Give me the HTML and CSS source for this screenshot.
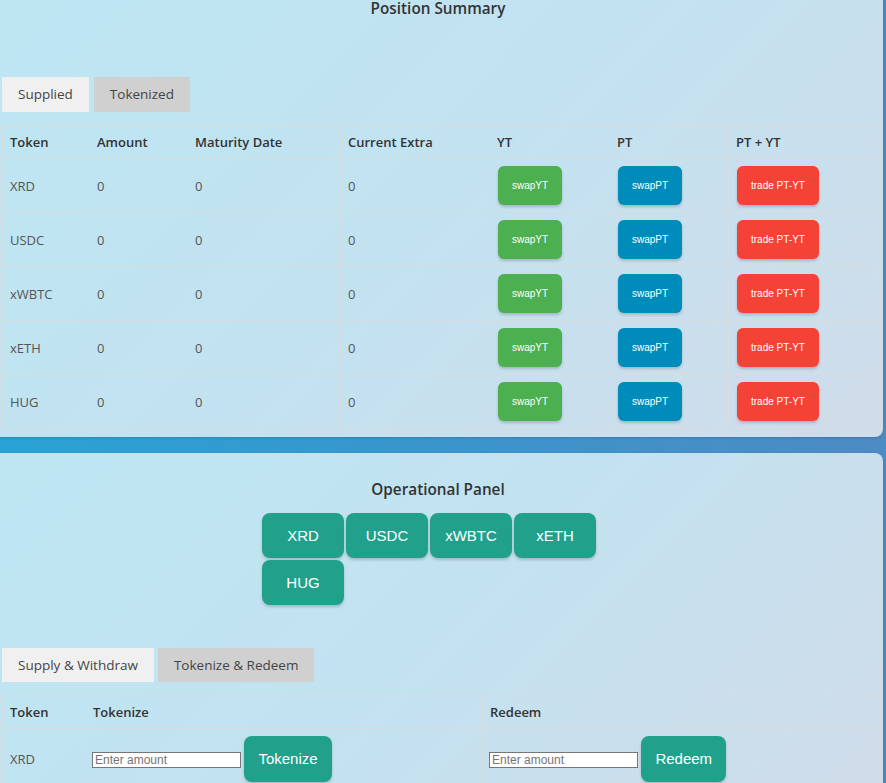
FILE: index.html
```html
<!DOCTYPE html>
<html lang="en">
<head>
<meta charset="utf-8">
<title>Position Summary</title>
<link rel="stylesheet" href="styles.css">
</head>
<body>
<main class="page">
  <section class="card card-summary">
    <h2 class="card-title">Position Summary</h2>
    <div class="tabs">
      <button class="tab tab-active">Supplied</button>
      <button class="tab">Tokenized</button>
    </div>
    <table class="grid">
      <colgroup>
        <col class="c-token"><col class="c-amount"><col class="c-maturity"><col class="c-extra"><col class="c-yt"><col class="c-pt"><col class="c-ptyt">
      </colgroup>
      <thead>
        <tr><th>Token</th><th>Amount</th><th>Maturity Date</th><th>Current Extra</th><th>YT</th><th>PT</th><th>PT + YT</th></tr>
      </thead>
      <tbody>
        <tr><td>XRD</td><td>0</td><td>0</td><td>0</td><td class="bcell"><button class="sbtn green">swapYT</button></td><td class="bcell"><button class="sbtn blue">swapPT</button></td><td class="bcell"><button class="sbtn red">trade PT-YT</button></td></tr>
        <tr><td>USDC</td><td>0</td><td>0</td><td>0</td><td class="bcell"><button class="sbtn green">swapYT</button></td><td class="bcell"><button class="sbtn blue">swapPT</button></td><td class="bcell"><button class="sbtn red">trade PT-YT</button></td></tr>
        <tr><td>xWBTC</td><td>0</td><td>0</td><td>0</td><td class="bcell"><button class="sbtn green">swapYT</button></td><td class="bcell"><button class="sbtn blue">swapPT</button></td><td class="bcell"><button class="sbtn red">trade PT-YT</button></td></tr>
        <tr><td>xETH</td><td>0</td><td>0</td><td>0</td><td class="bcell"><button class="sbtn green">swapYT</button></td><td class="bcell"><button class="sbtn blue">swapPT</button></td><td class="bcell"><button class="sbtn red">trade PT-YT</button></td></tr>
        <tr><td>HUG</td><td>0</td><td>0</td><td>0</td><td class="bcell"><button class="sbtn green">swapYT</button></td><td class="bcell"><button class="sbtn blue">swapPT</button></td><td class="bcell"><button class="sbtn red">trade PT-YT</button></td></tr>
      </tbody>
    </table>
  </section>

  <section class="card card-ops">
    <h2 class="card-title">Operational Panel</h2>
    <div class="token-picker">
      <button class="tbtn">XRD</button>
      <button class="tbtn">USDC</button>
      <button class="tbtn">xWBTC</button>
      <button class="tbtn">xETH</button>
      <button class="tbtn">HUG</button>
    </div>
    <div class="tabs tabs-ops">
      <button class="tab tab-active">Supply &amp; Withdraw</button>
      <button class="tab">Tokenize &amp; Redeem</button>
    </div>
    <table class="grid">
      <colgroup>
        <col class="o-token"><col class="o-tok"><col class="o-red">
      </colgroup>
      <thead>
        <tr><th>Token</th><th>Tokenize</th><th>Redeem</th></tr>
      </thead>
      <tbody>
        <tr>
          <td>XRD</td>
          <td class="action"><input class="amount" type="text" placeholder="Enter amount"> <button class="abtn">Tokenize</button></td>
          <td class="action"><input class="amount" type="text" placeholder="Enter amount"> <button class="abtn">Redeem</button></td>
        </tr>
      </tbody>
    </table>
  </section>
</main>
</body>
</html>
```

FILE: styles.css
```css
html, body {
  margin: 0;
  padding: 0;
}
body {
  height: 783px;
  overflow: hidden;
  background: linear-gradient(90deg, #2aa2d5 0%, #3a95cc 50%, #4d8bc4 100%);
  font-family: "Open Sans", "Liberation Sans", sans-serif;
  color: #333;
}
.page {
  display: flex;
  flex-direction: column;
  gap: 16px;
  margin-top: -10px;
}
.card {
  margin-left: -10px;
  width: 893px;
  box-sizing: border-box;
  padding: 0 9px 8px 12px;
  border-radius: 8px;
  background: linear-gradient(135deg, #bde6f3 0%, #c3e2f0 50%, #d0dcea 100%);
  box-shadow: 0 1px 3px rgba(0,0,0,0.15);
}
.card-summary {
  padding-top: 6px;
}
.card-ops {
  padding-top: 24px;
}
.card-title {
  margin: 0;
  text-align: center;
  font-size: 15.3px;
  font-weight: 600;
  line-height: 24px;
  color: #333;
}
.card-summary .card-title {
  margin-bottom: 57px;
}
.tabs {
  display: flex;
  gap: 5px;
  margin-bottom: 13px;
}
.tab {
  border: none;
  margin: 0;
  padding: 8px 16px;
  font-family: "Open Sans", "Liberation Sans", sans-serif;
  font-size: 13.5px;
  line-height: 19px;
  color: #444;
  background: #d0d0d0;
  cursor: pointer;
}
.tab-active {
  background: #f0f0f0;
}
.tabs-ops {
  margin-top: 43px;
  gap: 4px;
}
.tabs-ops .tab {
  line-height: 18px;
}
.grid {
  border-collapse: collapse;
  width: 873px;
  table-layout: fixed;
}
.grid th, .grid td {
  border: 1px solid rgba(215, 220, 222, 0.9);
  text-align: left;
  padding: 7px 7px;
  font-size: 13px;
  line-height: 18px;
}
.grid th {
  font-weight: 600;
  color: #333;
  padding-top: 7px;
  padding-bottom: 7px;
}
.grid td {
  color: #555;
  height: 39px;
}
.grid td.bcell {
  padding-left: 8px;
}
.c-token { width: 87px; }
.c-amount { width: 98px; }
.c-maturity { width: 153px; }
.c-extra { width: 149px; }
.c-yt { width: 120px; }
.c-pt { width: 119px; }
.c-ptyt { width: 147px; }

.sbtn {
  border: none;
  border-radius: 6px;
  padding: 13px 14px;
  font-family: "Liberation Sans", Arial, sans-serif;
  font-size: 10px;
  font-weight: normal;
  line-height: 13px;
  color: #fff;
  box-shadow: 0 2px 3px rgba(0,0,0,0.18);
  cursor: pointer;
  vertical-align: middle;
}
.green { background: #4caf50; }
.blue { background: #008cba; }
.red { background: #f44336; }

.token-picker {
  width: 352px;
  margin: 12px auto 0;
  display: flex;
  flex-wrap: wrap;
  gap: 2px;
}
.tbtn {
  width: 82px;
  border: none;
  border-radius: 8px;
  padding: 14px 0;
  font-family: "Liberation Sans", Arial, sans-serif;
  font-size: 15px;
  line-height: 17px;
  color: #fff;
  background: #21a18b;
  box-shadow: 0 2px 3px rgba(0,0,0,0.18);
  cursor: pointer;
}

.o-token { width: 83px; }
.o-tok { width: 397px; }
.o-red { width: 393px; }
.grid td.action {
  padding-left: 6px;
}
.amount {
  width: 149px;
  height: 16px;
  box-sizing: border-box;
  border: 1px solid #767676;
  padding: 0 2px;
  font-family: "Liberation Sans", Arial, sans-serif;
  font-size: 12px;
  line-height: 14px;
  background: #fff;
  color: #333;
}
.amount::placeholder {
  color: #757575;
}
.abtn {
  border: none;
  border-radius: 8px;
  padding: 14px 14px;
  font-family: "Liberation Sans", Arial, sans-serif;
  font-size: 15px;
  line-height: 18px;
  color: #fff;
  background: #21a18b;
  box-shadow: 0 2px 3px rgba(0,0,0,0.18);
  cursor: pointer;
}
```
